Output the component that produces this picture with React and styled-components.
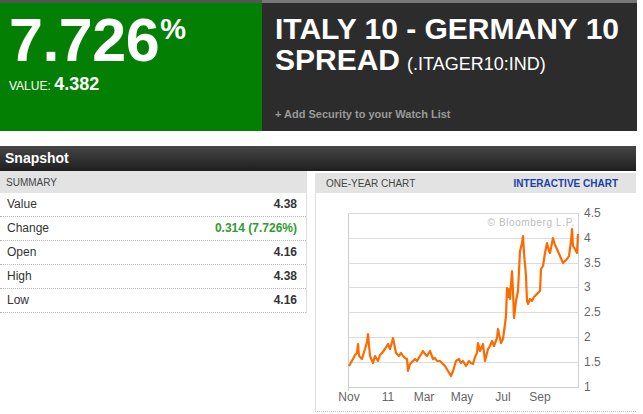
import React from 'react'
import styled, { createGlobalStyle } from 'styled-components'

const GlobalStyle = createGlobalStyle`
    body {
        margin: 0;
        background: #fff;
        font-family: "Liberation Sans", Arial, sans-serif;
    }
`

const Page = styled.div`
    width: 643px;
    height: 414px;
    overflow: hidden;
`

const Header = styled.div`
    display: flex;
    width: 637px;
    height: 131px;
`

const QuoteBox = styled.div`
    width: 262px;
    box-sizing: border-box;
    background: #037f03;
    border-top: 3px solid #555;
    padding: 7px 0 0 9px;
    color: #fff;
`

const BigValue = styled.div`
    display: flex;
    align-items: flex-start;
    font-size: 61px;
    font-weight: bold;
    line-height: 61px;
    letter-spacing: -0.5px;
`

const Percent = styled.span`
    font-size: 29px;
    line-height: 29px;
    margin-top: 5px;
    margin-left: 1px;
`

const ValueLine = styled.div`
    margin-top: 3px;
    font-size: 12px;
    span {
        font-size: 18px;
        font-weight: bold;
    }
`

const TitleBox = styled.div`
    flex: 1;
    display: flex;
    flex-direction: column;
    box-sizing: border-box;
    background: #2c2c2c;
    border-top: 3px solid #777;
    padding: 10px 0 10px 13px;
    color: #fff;
`

const Title = styled.h1`
    margin: 0;
    font-size: 30px;
    line-height: 31px;
    font-weight: bold;
`

const Ticker = styled.span`
    display: inline-block;
    font-size: 18px;
    line-height: 20px;
    font-weight: normal;
    margin-left: 7px;
`

const WatchLink = styled.a`
    margin-top: auto;
    font-size: 11px;
    line-height: 13px;
    font-weight: bold;
    color: #9a9a9a;
`

const SectionBar = styled.div`
    margin-top: 15px;
    width: 636px;
    height: 25px;
    box-sizing: border-box;
    padding-left: 5px;
    background: linear-gradient(#464646, #1f1f1f);
    color: #fff;
    font-size: 14px;
    font-weight: bold;
    line-height: 24px;
`

const Columns = styled.div`
    display: flex;
    gap: 8px;
    width: 636px;
`

const Summary = styled.div`
    width: 308px;
    align-self: flex-start;
    border-right: 1px solid #e0e0e0;
`

const PanelHead = styled.div`
    display: flex;
    justify-content: space-between;
    align-items: center;
    height: ${p => p.$h}px;
    padding: 0 ${p => p.$pr || 0}px 0 ${p => p.$pl}px;
    background: #e3e3e3;
    font-size: 10px;
    color: #444;
`

const Interactive = styled.a`
    color: #1a3fa8;
    font-weight: bold;
`

const Row = styled.div`
    display: flex;
    justify-content: space-between;
    height: 24px;
    box-sizing: border-box;
    padding: 0 9px 0 7px;
    border-bottom: 1px dotted #b8b8b8;
    font-size: 12px;
    line-height: 23px;
    color: #333;
`

const RowValue = styled.span`
    font-weight: bold;
    color: ${p => p.$up ? '#2f9a32' : '#333'};
`

const ChartPanel = styled.div`
    width: 320px;
    margin-top: 2px;
    border-left: 1px solid #e0e0e0;
    border-bottom: 1px dotted #b8b8b8;
`

const ChartBody = styled.div`
    height: 218px;
    svg { display: block; }
`

const rows = [
    ['Value', '4.38'],
    ['Change', '0.314 (7.726%)', true],
    ['Open', '4.16'],
    ['High', '4.38'],
    ['Low', '4.16'],
]

const pts = [
    [349, 365], [353, 358], [355, 354], [357, 352], [358, 343], [359, 355], [362, 358],
    [364, 351], [365, 348], [367, 341], [368, 333], [370, 355], [373, 362], [375, 355],
    [378, 360], [380, 354], [382, 352], [385, 348], [388, 343], [390, 348], [392, 341],
    [393, 337], [396, 352], [399, 355], [401, 352], [403, 355], [405, 357], [407, 358],
    [408, 370], [410, 363], [413, 360], [415, 358], [417, 360], [420, 355], [423, 350],
    [425, 353], [427, 355], [430, 350], [433, 358], [435, 357], [437, 360], [440, 360],
    [442, 362], [445, 365], [448, 370], [451, 375], [453, 370], [456, 360], [459, 358],
    [461, 362], [463, 360], [466, 365], [469, 360], [471, 362], [473, 363], [475, 356],
    [477, 352], [478, 342], [480, 350], [481, 348], [483, 343], [485, 360], [488, 348],
    [490, 345], [492, 340], [494, 345], [497, 337], [498, 328], [501, 342], [503, 338],
    [505, 323], [506, 315], [507, 287], [508, 296], [509, 288], [510, 298], [512, 270],
    [513, 290], [514, 317], [516, 300], [518, 290], [520, 250], [522, 242], [523, 235],
    [524, 252], [526, 275], [527, 300], [528, 303], [530, 298], [532, 300], [534, 296],
    [537, 293], [540, 290], [541, 268], [543, 265], [545, 252], [547, 242], [549, 250],
    [550, 252], [553, 237], [555, 244], [557, 248], [560, 255], [563, 262], [565, 260],
    [567, 258], [569, 255], [571, 240], [572, 228], [573, 245], [575, 248], [577, 252],
    [578, 233],
]

const yTicks = [['4.5', 212], ['4', 237], ['3.5', 262], ['3', 286], ['2.5', 311], ['2', 336], ['1.5', 361], ['1', 386]]
const xTicks = [['Nov', 349], ['11', 388], ['Mar', 424], ['May', 462], ['Jul', 503], ['Sep', 540]]

function Chart () {
    return (
        <svg width="320" height="218" viewBox="316 192 320 218">
            {yTicks.map(([label, y]) =>
                <g key={label}>
                    <line x1="348" x2="578" y1={y + 0.5} y2={y + 0.5} stroke="#dcdcdc" />
                    <text x="584" y={y + 4} fontSize="12" fill="#666" fontFamily="Liberation Sans, Arial, sans-serif">{label}</text>
                </g>
            )}
            <line x1="348.5" x2="348.5" y1="212" y2="390" stroke="#cfcfcf" />
            <line x1="578.5" x2="578.5" y1="212" y2="386" stroke="#cfcfcf" />
            <line x1="348" x2="579" y1="386.5" y2="386.5" stroke="#cfcfcf" />
            {xTicks.map(([label, x]) =>
                <text key={label} x={x} y="400" textAnchor="middle" fontSize="12" fill="#666" fontFamily="Liberation Sans, Arial, sans-serif">{label}</text>
            )}
            <text x="575" y="225" textAnchor="end" fontSize="10" fill="#bdbdbd" letterSpacing="0.6" fontFamily="Liberation Sans, Arial, sans-serif">© Bloomberg L.P.</text>
            <polyline points={pts.map(p => p.join(',')).join(' ')} fill="none" stroke="#ff6a00" strokeWidth="2.2" strokeLinejoin="round" />
        </svg>
    )
}

export default function App () {
    return (
        <Page>
            <GlobalStyle />
            <Header>
                <QuoteBox>
                    <BigValue>7.726<Percent>%</Percent></BigValue>
                    <ValueLine>VALUE: <span>4.382</span></ValueLine>
                </QuoteBox>
                <TitleBox>
                    <Title>
                        ITALY 10 - GERMANY 10<br />
                        SPREAD<Ticker>(.ITAGER10:IND)</Ticker>
                    </Title>
                    <WatchLink>+ Add Security to your Watch List</WatchLink>
                </TitleBox>
            </Header>
            <SectionBar>Snapshot</SectionBar>
            <Columns>
                <Summary>
                    <PanelHead $h={22} $pl={6}>SUMMARY</PanelHead>
                    {rows.map(([label, value, up]) =>
                        <Row key={label}>
                            <span>{label}</span>
                            <RowValue $up={up}>{value}</RowValue>
                        </Row>
                    )}
                </Summary>
                <ChartPanel>
                    <PanelHead $h={20} $pl={10} $pr={18}>
                        <span>ONE-YEAR CHART</span>
                        <Interactive>INTERACTIVE CHART</Interactive>
                    </PanelHead>
                    <ChartBody><Chart /></ChartBody>
                </ChartPanel>
            </Columns>
        </Page>
    )
}
